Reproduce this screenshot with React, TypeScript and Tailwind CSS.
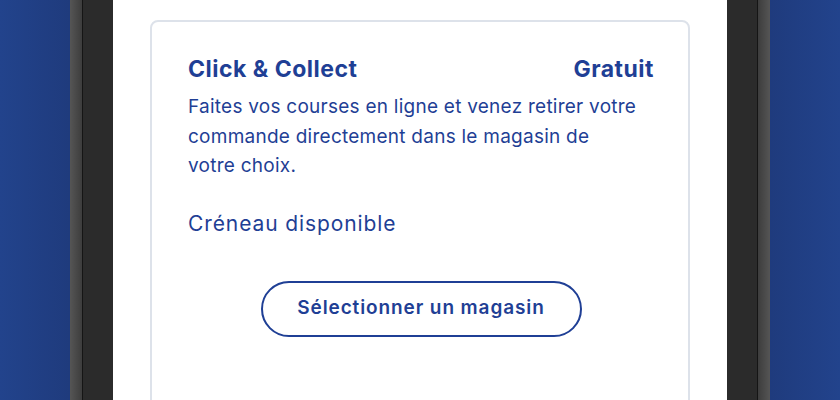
export default function App() {
  return (
    <div className="flex h-[400px] w-[840px] overflow-hidden bg-[#22428a] font-['Inter',sans-serif]">
      <div className="w-[70px] bg-gradient-to-r from-[#22438c] to-[#1f3b7d]" />
      <div className="w-[12px] bg-gradient-to-r from-[#555555] to-[#3d3d3d]" />
      <div className="w-px bg-[#151515]" />
      <div className="w-[30px] bg-[#2b2b2b]" />
      <div className="flex-1 bg-white px-[37px] pt-5">
        <div className="h-[420px] rounded-lg border-2 border-[#dde2ea] pl-[36px] pr-[34px] pt-[33px] text-[#1f3f95]">
          <div className="flex items-center justify-between text-[23px] leading-[28px] font-bold tracking-[0.5px]">
            <span>Click &amp; Collect</span>
            <span>Gratuit</span>
          </div>
          <p className="mt-[9px] text-[19px] leading-[29.5px] tracking-[0.25px]">
            Faites vos courses en ligne et venez retirer votre
            <br />
            commande directement dans le magasin de
            <br />
            votre choix.
          </p>
          <p className="mt-[28.5px] text-[21px] leading-[29.5px] tracking-[0.9px]">Créneau disponible</p>
          <div className="mt-[42px] flex justify-center">
            <button className="h-[56px] w-[321px] rounded-full border-2 border-[#1f3f95] text-[19px] font-semibold tracking-[0.9px]">
              Sélectionner un magasin
            </button>
          </div>
        </div>
      </div>
      <div className="w-[30px] bg-[#2b2b2b]" />
      <div className="w-px bg-[#151515]" />
      <div className="w-[12px] bg-gradient-to-r from-[#3d3d3d] to-[#555555]" />
      <div className="w-[70px] bg-gradient-to-r from-[#1f3b7d] to-[#22438c]" />
    </div>
  );
}
